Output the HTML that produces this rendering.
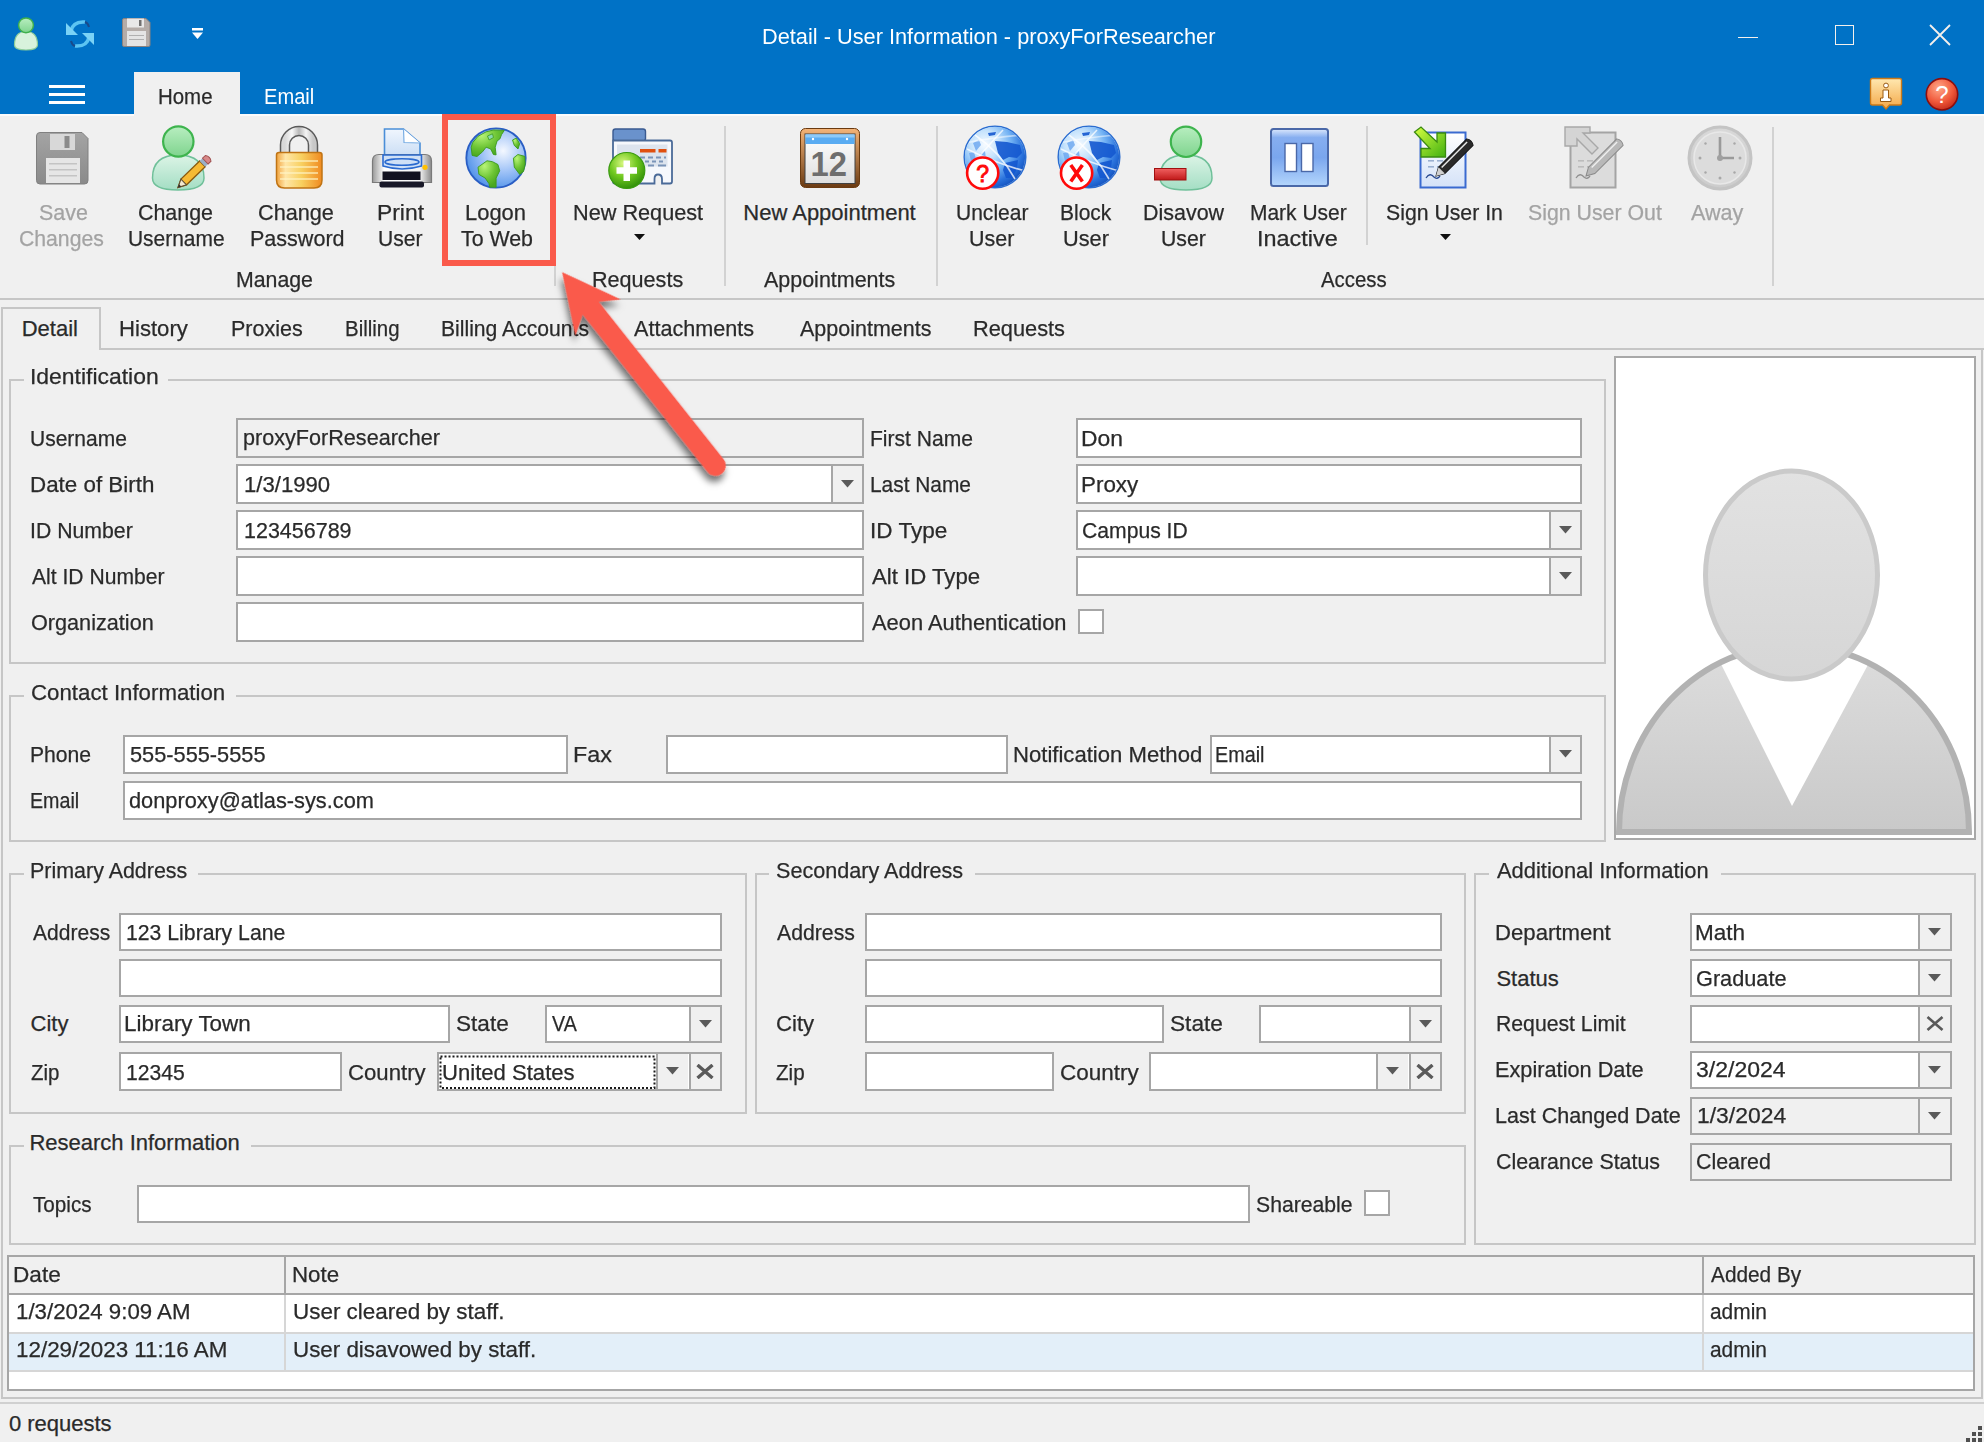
<!DOCTYPE html>
<html><head><meta charset='utf-8'><style>
html,body{margin:0;padding:0;width:1984px;height:1442px;overflow:hidden;background:#f0f0f0}
.a{position:absolute}
.t{position:absolute;font-family:"Liberation Sans",sans-serif;font-size:22px;line-height:22px;white-space:pre;transform-origin:0 0;-webkit-text-stroke:0.25px currentColor}
</style></head><body>
<div class=a style='left:0px;top:0px;width:1984px;height:1442px;background:#f0f0f0;'></div><div class=a style='left:0px;top:0px;width:1984px;height:114px;background:#0072c6;'></div><div class=a style='left:134px;top:72px;width:106px;height:42px;background:#f0f0f0;'></div><div class=a style='left:48.5px;top:85px;width:36px;height:3px;background:#ffffff;'></div><div class=a style='left:48.5px;top:93px;width:36px;height:3px;background:#ffffff;'></div><div class=a style='left:48.5px;top:101px;width:36px;height:3px;background:#ffffff;'></div><div class=a style='left:1738px;top:36.5px;width:20px;height:1.7px;background:#f4f0ec;'></div><div class=a style='left:1834.5px;top:25px;width:19.5px;height:19.5px;border:1.7px solid #f4f0ec;box-sizing:border-box;'></div><svg class=a style='left:1928px;top:23px' width=24 height=24><path d='M2 2L22 22M22 2L2 22' stroke='#f4f0ec' stroke-width='1.8'/></svg><div class=a style='left:0px;top:114px;width:1984px;height:184px;background:#f0f0f0;'></div><div class=a style='left:0px;top:114px;width:134px;height:2px;background:#fbfbfb;'></div><div class=a style='left:240px;top:114px;width:1744px;height:2px;background:#fbfbfb;'></div><div class=a style='left:0px;top:298px;width:1984px;height:2px;background:#c6c6c6;'></div><div class=a style='left:554px;top:126px;width:2px;height:160px;background:#d2d2d2;'></div><div class=a style='left:724px;top:126px;width:2px;height:160px;background:#d2d2d2;'></div><div class=a style='left:936px;top:126px;width:2px;height:160px;background:#d2d2d2;'></div><div class=a style='left:1366px;top:126px;width:2px;height:119px;background:#d2d2d2;'></div><div class=a style='left:1772px;top:127px;width:2px;height:159px;background:#d2d2d2;'></div><div class=a style='left:101px;top:348px;width:1883px;height:2px;background:#c6c6c6;'></div><div class=a style='left:1px;top:307px;width:100px;height:43px;border:2px solid #c6c6c6;border-bottom:none;box-sizing:border-box;background:#f0f0f0'></div><div class=a style='left:1px;top:349px;width:2px;height:1050px;background:#c6c6c6;'></div><div class=a style='left:1981px;top:349px;width:2px;height:1050px;background:#c6c6c6;'></div><div class=a style='left:1px;top:1397px;width:1982px;height:2px;background:#c6c6c6;'></div><div class=a style='left:0px;top:1402px;width:1984px;height:2px;background:#d0d0d0;'></div><div class=a style='left:8.5px;top:378.5px;width:2px;height:285.0px;background:#c6c6c6;'></div><div class=a style='left:1604px;top:378.5px;width:2px;height:285.0px;background:#c6c6c6;'></div><div class=a style='left:8.5px;top:661.5px;width:1597.5px;height:2px;background:#c6c6c6;'></div><div class=a style='left:8.5px;top:378.5px;width:15.5px;height:2px;background:#c6c6c6;'></div><div class=a style='left:168px;top:378.5px;width:1438px;height:2px;background:#c6c6c6;'></div><div class=a style='left:8.5px;top:694.5px;width:2px;height:147.0px;background:#c6c6c6;'></div><div class=a style='left:1604px;top:694.5px;width:2px;height:147.0px;background:#c6c6c6;'></div><div class=a style='left:8.5px;top:839.5px;width:1597.5px;height:2px;background:#c6c6c6;'></div><div class=a style='left:8.5px;top:694.5px;width:15.5px;height:2px;background:#c6c6c6;'></div><div class=a style='left:236px;top:694.5px;width:1370px;height:2px;background:#c6c6c6;'></div><div class=a style='left:8.5px;top:872.5px;width:2px;height:241.0px;background:#c6c6c6;'></div><div class=a style='left:744.5px;top:872.5px;width:2px;height:241.0px;background:#c6c6c6;'></div><div class=a style='left:8.5px;top:1111.5px;width:738.0px;height:2px;background:#c6c6c6;'></div><div class=a style='left:8.5px;top:872.5px;width:15.0px;height:2px;background:#c6c6c6;'></div><div class=a style='left:198px;top:872.5px;width:548.5px;height:2px;background:#c6c6c6;'></div><div class=a style='left:755px;top:872.5px;width:2px;height:241.0px;background:#c6c6c6;'></div><div class=a style='left:1464px;top:872.5px;width:2px;height:241.0px;background:#c6c6c6;'></div><div class=a style='left:755px;top:1111.5px;width:711px;height:2px;background:#c6c6c6;'></div><div class=a style='left:755px;top:872.5px;width:14px;height:2px;background:#c6c6c6;'></div><div class=a style='left:975px;top:872.5px;width:491px;height:2px;background:#c6c6c6;'></div><div class=a style='left:8.5px;top:1144.5px;width:2px;height:100.5px;background:#c6c6c6;'></div><div class=a style='left:1464px;top:1144.5px;width:2px;height:100.5px;background:#c6c6c6;'></div><div class=a style='left:8.5px;top:1243px;width:1457.5px;height:2px;background:#c6c6c6;'></div><div class=a style='left:8.5px;top:1144.5px;width:15.0px;height:2px;background:#c6c6c6;'></div><div class=a style='left:251px;top:1144.5px;width:1215px;height:2px;background:#c6c6c6;'></div><div class=a style='left:1474px;top:872.5px;width:2px;height:372.5px;background:#c6c6c6;'></div><div class=a style='left:1974px;top:872.5px;width:2px;height:372.5px;background:#c6c6c6;'></div><div class=a style='left:1474px;top:1243px;width:502px;height:2px;background:#c6c6c6;'></div><div class=a style='left:1474px;top:872.5px;width:15px;height:2px;background:#c6c6c6;'></div><div class=a style='left:1721px;top:872.5px;width:255px;height:2px;background:#c6c6c6;'></div><div class=a style='left:236px;top:418px;width:628px;height:39.5px;background:#f0f0f0;border:2px solid #a6a6a6;box-sizing:border-box;'></div><div class=a style='left:236px;top:464px;width:628px;height:39.5px;background:#ffffff;border:2px solid #a6a6a6;box-sizing:border-box;'></div><div class=a style='left:831.5px;top:466px;width:30.5px;height:35.5px;background:#f0f0f0;'></div><div class=a style='left:830.5px;top:464px;width:2px;height:39.5px;background:#a6a6a6;'></div><svg class=a style='left:840.8px;top:479.8px' width=13 height=8><path d='M0 0H13L6.5 7.5Z' fill='#5a5a5a'/></svg><div class=a style='left:236px;top:510px;width:628px;height:39.5px;background:#ffffff;border:2px solid #a6a6a6;box-sizing:border-box;'></div><div class=a style='left:236px;top:556px;width:628px;height:39.5px;background:#ffffff;border:2px solid #a6a6a6;box-sizing:border-box;'></div><div class=a style='left:236px;top:602px;width:628px;height:39.5px;background:#ffffff;border:2px solid #a6a6a6;box-sizing:border-box;'></div><div class=a style='left:1076px;top:418px;width:506px;height:39.5px;background:#ffffff;border:2px solid #a6a6a6;box-sizing:border-box;'></div><div class=a style='left:1076px;top:464px;width:506px;height:39.5px;background:#ffffff;border:2px solid #a6a6a6;box-sizing:border-box;'></div><div class=a style='left:1076px;top:510px;width:506px;height:39.5px;background:#ffffff;border:2px solid #a6a6a6;box-sizing:border-box;'></div><div class=a style='left:1549.5px;top:512px;width:30.5px;height:35.5px;background:#f0f0f0;'></div><div class=a style='left:1548.5px;top:510px;width:2px;height:39.5px;background:#a6a6a6;'></div><svg class=a style='left:1558.8px;top:525.8px' width=13 height=8><path d='M0 0H13L6.5 7.5Z' fill='#5a5a5a'/></svg><div class=a style='left:1076px;top:556px;width:506px;height:39.5px;background:#ffffff;border:2px solid #a6a6a6;box-sizing:border-box;'></div><div class=a style='left:1549.5px;top:558px;width:30.5px;height:35.5px;background:#f0f0f0;'></div><div class=a style='left:1548.5px;top:556px;width:2px;height:39.5px;background:#a6a6a6;'></div><svg class=a style='left:1558.8px;top:571.8px' width=13 height=8><path d='M0 0H13L6.5 7.5Z' fill='#5a5a5a'/></svg><div class=a style='left:1078px;top:608.5px;width:25.5px;height:25.5px;background:#ffffff;border:2px solid #a6a6a6;box-sizing:border-box;'></div><div class=a style='left:1614px;top:356px;width:362px;height:484px;box-sizing:border-box;border:2px solid #a8a8a8;background:#fff;overflow:hidden'>
<svg width=358 height=480 style='position:absolute;left:0;top:0'>
<defs><linearGradient id=bodyg x1=0 y1=0 x2=0 y2=1><stop offset=0 stop-color='#dddddd'/><stop offset=1 stop-color='#c9c9c9'/></linearGradient>
<linearGradient id=headg x1=0 y1=0 x2=0 y2=1><stop offset=0 stop-color='#e2e2e2'/><stop offset=1 stop-color='#d6d6d6'/></linearGradient></defs>
<path d='M3 474 A175 187 0 0 1 353 474 Z' fill='url(#bodyg)'/>
<path d='M97 290 L261 290 L176 448 Z' fill='#ffffff'/>
<path d='M3 474 A175 187 0 0 1 353 474 Z' fill='none' stroke='#b2b2b2' stroke-width='6'/>
<ellipse cx='175.5' cy='217' rx='86' ry='104' fill='url(#headg)' stroke='#cacaca' stroke-width='5'/>
</svg></div><div class=a style='left:122.5px;top:734.5px;width:445.5px;height:39.0px;background:#ffffff;border:2px solid #a6a6a6;box-sizing:border-box;'></div><div class=a style='left:666px;top:734.5px;width:342px;height:39.0px;background:#ffffff;border:2px solid #a6a6a6;box-sizing:border-box;'></div><div class=a style='left:1210px;top:734.5px;width:372px;height:39.0px;background:#ffffff;border:2px solid #a6a6a6;box-sizing:border-box;'></div><div class=a style='left:1549.5px;top:736.5px;width:30.5px;height:35.0px;background:#f0f0f0;'></div><div class=a style='left:1548.5px;top:734.5px;width:2px;height:39.0px;background:#a6a6a6;'></div><svg class=a style='left:1558.8px;top:750.0px' width=13 height=8><path d='M0 0H13L6.5 7.5Z' fill='#5a5a5a'/></svg><div class=a style='left:122.5px;top:780.5px;width:1459.5px;height:39.0px;background:#ffffff;border:2px solid #a6a6a6;box-sizing:border-box;'></div><div class=a style='left:119px;top:912.5px;width:603px;height:38.5px;background:#ffffff;border:2px solid #a6a6a6;box-sizing:border-box;'></div><div class=a style='left:119px;top:958.5px;width:603px;height:38.5px;background:#ffffff;border:2px solid #a6a6a6;box-sizing:border-box;'></div><div class=a style='left:119px;top:1004.5px;width:330.5px;height:38.5px;background:#ffffff;border:2px solid #a6a6a6;box-sizing:border-box;'></div><div class=a style='left:545px;top:1004.5px;width:177px;height:38.5px;background:#ffffff;border:2px solid #a6a6a6;box-sizing:border-box;'></div><div class=a style='left:689.5px;top:1006.5px;width:30.5px;height:34.5px;background:#f0f0f0;'></div><div class=a style='left:688.5px;top:1004.5px;width:2px;height:38.5px;background:#a6a6a6;'></div><svg class=a style='left:698.8px;top:1019.8px' width=13 height=8><path d='M0 0H13L6.5 7.5Z' fill='#5a5a5a'/></svg><div class=a style='left:119px;top:1051.5px;width:222.5px;height:39.5px;background:#ffffff;border:2px solid #a6a6a6;box-sizing:border-box;'></div><div class=a style='left:437px;top:1051.5px;width:285px;height:39.5px;background:#ffffff;border:2px solid #a6a6a6;box-sizing:border-box;'></div><div class=a style='left:689.5px;top:1053.5px;width:30.5px;height:35.5px;background:#f0f0f0;'></div><div class=a style='left:688.5px;top:1051.5px;width:2px;height:39.5px;background:#a6a6a6;'></div><svg class=a style='left:696.2px;top:1063.8px' width=18 height=15><path d='M1.5 1L16.5 14M16.5 1L1.5 14' stroke='#5a5a5a' stroke-width='3.4'/></svg><div class=a style='left:657.0px;top:1053.5px;width:30.5px;height:35.5px;background:#f0f0f0;'></div><div class=a style='left:656.0px;top:1051.5px;width:2px;height:39.5px;background:#a6a6a6;'></div><svg class=a style='left:666.2px;top:1067.2px' width=13 height=8><path d='M0 0H13L6.5 7.5Z' fill='#5a5a5a'/></svg><svg class=a style='left:438px;top:1054px' width=220 height=37><rect x='2.5' y='2.5' width='214' height='31.5' fill='none' stroke='#1a1a1a' stroke-width='2' stroke-dasharray='2 2'/></svg><div class=a style='left:865px;top:912.5px;width:577px;height:38.5px;background:#ffffff;border:2px solid #a6a6a6;box-sizing:border-box;'></div><div class=a style='left:865px;top:958.5px;width:577px;height:38.5px;background:#ffffff;border:2px solid #a6a6a6;box-sizing:border-box;'></div><div class=a style='left:865px;top:1004.5px;width:299px;height:38.5px;background:#ffffff;border:2px solid #a6a6a6;box-sizing:border-box;'></div><div class=a style='left:1258.5px;top:1004.5px;width:183.5px;height:38.5px;background:#ffffff;border:2px solid #a6a6a6;box-sizing:border-box;'></div><div class=a style='left:1409.5px;top:1006.5px;width:30.5px;height:34.5px;background:#f0f0f0;'></div><div class=a style='left:1408.5px;top:1004.5px;width:2px;height:38.5px;background:#a6a6a6;'></div><svg class=a style='left:1418.8px;top:1019.8px' width=13 height=8><path d='M0 0H13L6.5 7.5Z' fill='#5a5a5a'/></svg><div class=a style='left:865px;top:1051.5px;width:189px;height:39.5px;background:#ffffff;border:2px solid #a6a6a6;box-sizing:border-box;'></div><div class=a style='left:1148.5px;top:1051.5px;width:293.5px;height:39.5px;background:#ffffff;border:2px solid #a6a6a6;box-sizing:border-box;'></div><div class=a style='left:1409.5px;top:1053.5px;width:30.5px;height:35.5px;background:#f0f0f0;'></div><div class=a style='left:1408.5px;top:1051.5px;width:2px;height:39.5px;background:#a6a6a6;'></div><svg class=a style='left:1416.2px;top:1063.8px' width=18 height=15><path d='M1.5 1L16.5 14M16.5 1L1.5 14' stroke='#5a5a5a' stroke-width='3.4'/></svg><div class=a style='left:1377.0px;top:1053.5px;width:30.5px;height:35.5px;background:#f0f0f0;'></div><div class=a style='left:1376.0px;top:1051.5px;width:2px;height:39.5px;background:#a6a6a6;'></div><svg class=a style='left:1386.2px;top:1067.2px' width=13 height=8><path d='M0 0H13L6.5 7.5Z' fill='#5a5a5a'/></svg><div class=a style='left:136.5px;top:1184.5px;width:1113.5px;height:38.0px;background:#ffffff;border:2px solid #a6a6a6;box-sizing:border-box;'></div><div class=a style='left:1364px;top:1190px;width:25.5px;height:25.5px;background:#ffffff;border:2px solid #a6a6a6;box-sizing:border-box;'></div><div class=a style='left:1690px;top:913px;width:261.5px;height:38px;background:#ffffff;border:2px solid #a6a6a6;box-sizing:border-box;'></div><div class=a style='left:1919.0px;top:915px;width:30.5px;height:34px;background:#f0f0f0;'></div><div class=a style='left:1918.0px;top:913px;width:2px;height:38px;background:#a6a6a6;'></div><svg class=a style='left:1928.2px;top:928.0px' width=13 height=8><path d='M0 0H13L6.5 7.5Z' fill='#5a5a5a'/></svg><div class=a style='left:1690px;top:959px;width:261.5px;height:38px;background:#ffffff;border:2px solid #a6a6a6;box-sizing:border-box;'></div><div class=a style='left:1919.0px;top:961px;width:30.5px;height:34px;background:#f0f0f0;'></div><div class=a style='left:1918.0px;top:959px;width:2px;height:38px;background:#a6a6a6;'></div><svg class=a style='left:1928.2px;top:974.0px' width=13 height=8><path d='M0 0H13L6.5 7.5Z' fill='#5a5a5a'/></svg><div class=a style='left:1690px;top:1004.8px;width:261.5px;height:38.0px;background:#ffffff;border:2px solid #a6a6a6;box-sizing:border-box;'></div><div class=a style='left:1919.0px;top:1006.8px;width:30.5px;height:34.0px;background:#f0f0f0;'></div><div class=a style='left:1918.0px;top:1004.8px;width:2px;height:38.0px;background:#a6a6a6;'></div><svg class=a style='left:1925.8px;top:1016.3px' width=18 height=15><path d='M1.5 1L16.5 14M16.5 1L1.5 14' stroke='#5a5a5a' stroke-width='2.6'/></svg><div class=a style='left:1690px;top:1050.6px;width:261.5px;height:38.0px;background:#ffffff;border:2px solid #a6a6a6;box-sizing:border-box;'></div><div class=a style='left:1919.0px;top:1052.6px;width:30.5px;height:34.0px;background:#f0f0f0;'></div><div class=a style='left:1918.0px;top:1050.6px;width:2px;height:38.0px;background:#a6a6a6;'></div><svg class=a style='left:1928.2px;top:1065.6px' width=13 height=8><path d='M0 0H13L6.5 7.5Z' fill='#5a5a5a'/></svg><div class=a style='left:1690px;top:1096.9px;width:261.5px;height:38.0px;background:#f0f0f0;border:2px solid #a6a6a6;box-sizing:border-box;'></div><div class=a style='left:1919.0px;top:1098.9px;width:30.5px;height:34.0px;background:#f0f0f0;'></div><div class=a style='left:1918.0px;top:1096.9px;width:2px;height:38.0px;background:#a6a6a6;'></div><svg class=a style='left:1928.2px;top:1111.9px' width=13 height=8><path d='M0 0H13L6.5 7.5Z' fill='#5a5a5a'/></svg><div class=a style='left:1690px;top:1142.6px;width:261.5px;height:38.0px;background:#f0f0f0;border:2px solid #a6a6a6;box-sizing:border-box;'></div><div class=a style='left:7px;top:1255px;width:1968px;height:136px;background:#ffffff;border:2px solid #a6a6a6;box-sizing:border-box;'></div><div class=a style='left:9px;top:1257px;width:1964px;height:37px;background:#f0f0f0;'></div><div class=a style='left:9px;top:1293px;width:1964px;height:2px;background:#a6a6a6;'></div><div class=a style='left:9px;top:1332px;width:1964px;height:2px;background:#d6d6d6;'></div><div class=a style='left:9px;top:1334px;width:1964px;height:36px;background:#e3eff9;'></div><div class=a style='left:9px;top:1369.5px;width:1964px;height:2px;background:#d6d6d6;'></div><div class=a style='left:284px;top:1257px;width:2px;height:37px;background:#a6a6a6;'></div><div class=a style='left:1702px;top:1257px;width:2px;height:37px;background:#a6a6a6;'></div><div class=a style='left:284px;top:1295px;width:2px;height:75px;background:#d6d6d6;'></div><div class=a style='left:1702px;top:1295px;width:2px;height:75px;background:#d6d6d6;'></div><div class=a style='left:1978px;top:1426px;width:3.5px;height:3.5px;background:#505050;'></div><div class=a style='left:1972px;top:1432px;width:3.5px;height:3.5px;background:#505050;'></div><div class=a style='left:1978px;top:1432px;width:3.5px;height:3.5px;background:#505050;'></div><div class=a style='left:1966px;top:1438px;width:3.5px;height:3.5px;background:#505050;'></div><div class=a style='left:1972px;top:1438px;width:3.5px;height:3.5px;background:#505050;'></div><div class=a style='left:1978px;top:1438px;width:3.5px;height:3.5px;background:#505050;'></div><div class=a style='left:442px;top:114px;width:114px;height:152px;border:6.5px solid #fa5a4b;box-sizing:border-box'></div>
<svg class=a style='left:0;top:0' width=1984 height=300>
<defs>
<clipPath id=clipG><circle r='30'/></clipPath>
<linearGradient id=gHead x1=0 y1=0 x2=0 y2=1><stop offset=0 stop-color='#b8eec0'/><stop offset=1 stop-color='#7fd48e'/></linearGradient>
<linearGradient id=gBody x1=0 y1=0 x2=0 y2=1><stop offset=0 stop-color='#dcf4e6'/><stop offset=1 stop-color='#a4dec4'/></linearGradient>
<linearGradient id=gLock x1=0 y1=0 x2=1 y2=0><stop offset=0 stop-color='#f2a440'/><stop offset=0.2 stop-color='#ffe6a8'/><stop offset=0.55 stop-color='#f8d060'/><stop offset=1 stop-color='#f08a20'/></linearGradient>
<linearGradient id=gShk x1=0 y1=0 x2=1 y2=0><stop offset=0 stop-color='#d8d8d8'/><stop offset=0.25 stop-color='#f8f8f8'/><stop offset=0.5 stop-color='#b8b8b8'/><stop offset=0.75 stop-color='#f4f4f4'/><stop offset=1 stop-color='#c8c8c8'/></linearGradient>
<linearGradient id=gPrn x1=0 y1=0 x2=1 y2=0><stop offset=0 stop-color='#9a9a9a'/><stop offset=0.2 stop-color='#ffffff'/><stop offset=0.8 stop-color='#f4f4f4'/><stop offset=1 stop-color='#8a8a8a'/></linearGradient>
<linearGradient id=gPaper x1=0 y1=0 x2=0 y2=1><stop offset=0 stop-color='#f0f6fe'/><stop offset=1 stop-color='#c8dcf4'/></linearGradient>
<radialGradient id=gGlobe cx=0.62 cy=0.38 r=0.7><stop offset=0 stop-color='#f4f8ff'/><stop offset=0.45 stop-color='#a8c8f8'/><stop offset=1 stop-color='#4a8ee8'/></radialGradient>
<radialGradient id=gBGlobe cx=0.33 cy=0.3 r=0.8><stop offset=0 stop-color='#f6fbff'/><stop offset=0.3 stop-color='#c4e2fc'/><stop offset=0.55 stop-color='#72b2f4'/><stop offset=0.8 stop-color='#2a72dc'/><stop offset=1 stop-color='#0c4ab8'/></radialGradient>
<radialGradient id=gPlus cx=0.4 cy=0.3 r=0.75><stop offset=0 stop-color='#d8f880'/><stop offset=0.5 stop-color='#70c820'/><stop offset=1 stop-color='#2a8a08'/></radialGradient>
<linearGradient id=gCal x1=0 y1=0 x2=0 y2=1><stop offset=0 stop-color='#f4b478'/><stop offset=1 stop-color='#6a3a12'/></linearGradient>
<linearGradient id=gCalIn x1=0 y1=0 x2=0 y2=1><stop offset=0 stop-color='#ffffff'/><stop offset=1 stop-color='#dedede'/></linearGradient>
<linearGradient id=gPause x1=0 y1=0 x2=0 y2=1><stop offset=0 stop-color='#dce8fc'/><stop offset=0.15 stop-color='#86aef0'/><stop offset=0.5 stop-color='#7aa6ee'/><stop offset=1 stop-color='#b4d6fc'/></linearGradient>
<linearGradient id=gDoc x1=0 y1=0 x2=0 y2=1><stop offset=0 stop-color='#ffffff'/><stop offset=1 stop-color='#d4e2f8'/></linearGradient>
<linearGradient id=gArr x1=0 y1=0 x2=1 y2=1><stop offset=0 stop-color='#d8ff40'/><stop offset=1 stop-color='#40b010'/></linearGradient>
<radialGradient id=gClock cx=0.5 cy=0.4 r=0.6><stop offset=0 stop-color='#ececec'/><stop offset=1 stop-color='#cacaca'/></radialGradient>
<linearGradient id=gInfo x1=0 y1=0 x2=0 y2=1><stop offset=0 stop-color='#ffe8b0'/><stop offset=1 stop-color='#f4a848'/></linearGradient>
<radialGradient id=gHelp cx=0.4 cy=0.3 r=0.75><stop offset=0 stop-color='#ffa888'/><stop offset=0.6 stop-color='#f0583a'/><stop offset=1 stop-color='#c02818'/></radialGradient>
<linearGradient id=gFlop x1=0 y1=0 x2=0 y2=1><stop offset=0 stop-color='#a4a4a4'/><stop offset=1 stop-color='#8a8a8a'/></linearGradient>
<linearGradient id=gRed x1=0 y1=0 x2=0 y2=1><stop offset=0 stop-color='#f06060'/><stop offset=1 stop-color='#c01818'/></linearGradient>
</defs>

<!-- QAT person -->
<path d='M14.5 45 Q14.5 31.5 26 31.5 Q37.5 31.5 37.5 45 Q37.5 50 26 50 Q14.5 50 14.5 45Z' fill='#d8f2dc' stroke='#8ccc98' stroke-width='1.2'/>
<circle cx='26' cy='25.3' r='7.4' fill='url(#gHead)' stroke='#40b04c' stroke-width='1.5'/>
<!-- QAT sync -->
<path d='M71 31 Q73 21 85 22' fill='none' stroke='#5cc4f2' stroke-width='3.5'/>
<path d='M66 23 L66 35 L78 35 Z' fill='#7ad2f6'/>
<path d='M89 37 Q87 47 75 46' fill='none' stroke='#5cc4f2' stroke-width='3.5'/>
<path d='M94 45 L94 33 L82 33 Z' fill='#7ad2f6'/>
<path d='M85 22 Q88 23 89 27' fill='none' stroke='#1a4a8a' stroke-width='2'/>
<path d='M75 46 Q72 45 71 41' fill='none' stroke='#1a4a8a' stroke-width='2'/>
<!-- QAT floppy -->
<path d='M122.5 20 Q122.5 18.5 124 18.5 L146 18.5 L150 22.5 L150 45 Q150 46.5 148.5 46.5 L124 46.5 Q122.5 46.5 122.5 45Z' fill='#b4aca8' stroke='#8a8280' stroke-width='1'/>
<rect x='127' y='18.5' width='17' height='9' fill='#e8e8e8'/>
<rect x='139' y='20' width='2.5' height='6' fill='#707070'/>
<rect x='127' y='31' width='19' height='15' fill='#e4e4e4'/>
<rect x='129' y='35' width='15' height='1' fill='#b0b0b0'/><rect x='129' y='39' width='15' height='1' fill='#b0b0b0'/>
<!-- QAT dropdown -->
<rect x='192' y='28' width='11' height='2.5' fill='#fff'/>
<path d='M192 32.5 H203 L197.5 39 Z' fill='#fff'/>

<!-- Save (disabled floppy) -->
<path d='M36.5 136 Q36.5 132.5 40 132.5 L82 132.5 L88 138.5 L88 180.5 Q88 184 84.5 184 L40 184 Q36.5 184 36.5 180.5Z' fill='url(#gFlop)' stroke='#808080' stroke-width='1'/>
<rect x='50' y='134' width='25' height='16' fill='#d8d8d8'/>
<rect x='64.5' y='136' width='5' height='12' fill='#8a8a8a'/>
<rect x='46' y='158' width='34' height='25' fill='#e6e6e6'/>
<rect x='49' y='163' width='28' height='1.5' fill='#c4c4c4'/><rect x='49' y='169' width='28' height='1.5' fill='#c4c4c4'/><rect x='49' y='175' width='28' height='1.5' fill='#c4c4c4'/>

<!-- Change Username -->
<path d='M152.5 178 Q152.5 155 178 155 Q204 155 204 178 Q204 190 178 190 Q152.5 190 152.5 178Z' fill='url(#gBody)' stroke='#70c09a' stroke-width='1.5'/>
<circle cx='178.3' cy='141.5' r='15.2' fill='url(#gHead)' stroke='#3eb44e' stroke-width='2.2'/>
<g transform='translate(178 187.5) rotate(-44)'>
<path d='M0 0 L8 -4 L34 -4 L34 4 L8 4 Z' fill='#f6ba34' stroke='#8a5a10' stroke-width='1.3'/>
<path d='M0 0 L8 -4 L8 4 Z' fill='#f4e8d0' stroke='#5a4a30' stroke-width='1'/>
<path d='M0 0 L3 -1.5 L3 1.5Z' fill='#303030'/>
<rect x='34' y='-4' width='4' height='8' fill='#9ab0c8'/>
<path d='M38 -4 L42 -4 Q45 0 42 4 L38 4 Z' fill='#d88888' stroke='#a05050' stroke-width='1'/>
</g>

<!-- Change Password (lock) -->
<path d='M285 153 V145 A14 14 0 0 1 313 145 V153' fill='none' stroke='#5a5a5a' stroke-width='10.5'/>
<path d='M285 153 V145 A14 14 0 0 1 313 145 V153' fill='none' stroke='url(#gShk)' stroke-width='7.5'/>
<path d='M276.5 155 Q276.5 152.5 279 152.5 L319.5 152.5 Q322 152.5 322 155 L322 180 Q322 188 314 188 L284.5 188 Q276.5 188 276.5 180Z' fill='url(#gLock)' stroke='#c07414' stroke-width='1.5'/>
<g fill='#fff6c8' opacity='0.6'><rect x='280' y='160' width='38' height='2'/><rect x='280' y='166' width='38' height='2'/><rect x='280' y='172' width='38' height='2'/><rect x='280' y='178' width='38' height='2'/></g>

<!-- Print User -->
<path d='M384.5 129 L403.5 129 L420 143 L420 158 L384.5 158 Z' fill='url(#gPaper)' stroke='#4a8ed8' stroke-width='1.6'/>
<path d='M403.5 129 L404 142.5 L420 143' fill='#fff' stroke='#7aaee4' stroke-width='1.2'/>
<path d='M372.5 161 Q372.5 154.5 379 154.5 L425 154.5 Q431.5 154.5 431.5 161 L431.5 182.5 L372.5 182.5 Z' fill='url(#gPrn)' stroke='#7a7a7a' stroke-width='1.2'/>
<path d='M383 155 L421.5 155 L421.5 166 Q402 172 383 166 Z' fill='#cfe0f6' stroke='#2a6ad0' stroke-width='1.6'/>
<ellipse cx='402' cy='162' rx='17' ry='3.2' fill='none' stroke='#2a6ad0' stroke-width='1.5'/>
<rect x='382.5' y='171.5' width='38' height='8.5' fill='#121220'/>
<rect x='379.5' y='181.5' width='44.5' height='6' rx='2' fill='#181828'/>
<circle cx='425' cy='167.3' r='2.6' fill='#ffc000'/>

<!-- Logon to web globe -->
<radialGradient id=gCont cx=0.3 cy=0.2 r=0.8><stop offset=0 stop-color='#b8f478'/><stop offset=0.6 stop-color='#6cc434'/><stop offset=1 stop-color='#4aa820'/></radialGradient>
<circle cx='496' cy='158' r='29.7' fill='url(#gGlobe)' stroke='#2a5ec4' stroke-width='1.8'/>
<g fill='url(#gCont)' stroke='#3c9a1c' stroke-width='0.9'>
<path d='M472.1 155.4 L471.2 147.2 L472.6 142.7 L478 136.3 L486.1 131.8 L493.4 130 L504.3 130.4 L501.6 134.5 L499.8 139 L497.1 140.9 L495.2 147.2 L496.1 154.9 L493.4 154.5 L490.7 149 L486.1 147.2 L482.5 151.8 L477 156.5 Z'/>
<path d='M487 160.8 L492.5 161.7 L497.9 164.5 L499.7 170.8 L496.1 178.1 L496.1 187.2 L489.8 187.2 L488.9 183.5 L485.2 178.1 L478.9 174.4 L478 167.2 Z'/>
<path d='M513.4 158.1 L517.9 154.5 L524.7 156.3 L525.2 164 L523.5 171.5 L519.7 174.4 L514.3 167.2 Z'/>
<path d='M512.5 140 L516.2 138.1 L519.7 143.6 L518 149 L514.3 145.4 Z'/>
</g>
<path d='M487.5 136 L492.5 133.8 L493.5 137.5 L489 140 Z' fill='#8ad8b0' stroke='#3c9a1c' stroke-width='0.8'/>

<!-- New Request -->
<rect x='613' y='129' width='32.5' height='12' rx='2.5' fill='#6a92cc' stroke='#3a5a90' stroke-width='1.4'/>
<path d='M613 140.5 L670 140.5 Q672 140.5 672 142.5 L672 181.5 Q672 183.5 670 183.5 L662 183.5 L662 179 Q662 174.5 658 174.5 Q654.5 174.5 654.5 179 L654.5 183.5 L615 183.5 Q613 183.5 613 181.5 Z' fill='#f6f8fc' stroke='#4a6a98' stroke-width='1.8'/>
<rect x='617' y='144.5' width='50.5' height='22' fill='#dde4ee'/>
<rect x='640' y='149' width='15.5' height='3.5' fill='#e05010'/><rect x='658.5' y='149' width='8' height='3.5' fill='#e05010'/>
<g fill='#7a94b8'><rect x='640' y='156.5' width='5' height='2'/><rect x='648' y='156.5' width='5' height='2'/><rect x='656' y='156.5' width='5' height='2'/><rect x='664' y='156.5' width='2' height='2'/>
<rect x='645' y='160.5' width='4' height='2'/><rect x='652' y='160.5' width='4' height='2'/><rect x='659' y='160.5' width='4' height='2'/>
<rect x='648' y='164.5' width='6' height='2'/><rect x='658' y='164.5' width='8' height='2'/></g>
<circle cx='626.8' cy='170.5' r='18' fill='url(#gPlus)' stroke='#3a9a10' stroke-width='1.2'/>
<path d='M623.5 160.5 H630 V167.2 H637 V173.7 H630 V181 H623.5 V173.7 H616.5 V167.2 H623.5 Z' fill='#ffffff'/>
<!-- dropdown arrows -->
<path d='M634 234 H645 L639.5 240 Z' fill='#101010'/>
<path d='M1440 234 H1451 L1445.5 240 Z' fill='#101010'/>

<!-- Calendar -->
<rect x='800.5' y='128.5' width='59' height='59' rx='5' fill='url(#gCal)' stroke='#6a3a10' stroke-width='1'/>
<rect x='805' y='134' width='50' height='49.5' fill='url(#gCalIn)' stroke='#404040' stroke-width='1'/>
<rect x='805.5' y='134.5' width='49' height='9.5' fill='#5aacf2'/>
<rect x='805.5' y='134.5' width='49' height='3' fill='#8ecaf8'/>
<circle cx='813' cy='139' r='1.2' fill='#fff'/><circle cx='847' cy='139' r='1.2' fill='#fff'/>
<text x='810.5' y='176.5' font-family='Liberation Sans' font-weight='bold' font-size='36' fill='#6e6e6e' transform='translate(810.5 0) scale(0.91 1) translate(-810.5 0)'>12</text>

<!-- Unclear User globe -->
<g transform='translate(995 157)'><g fill='none' stroke='#2a6cd0' stroke-width='1.5'><circle r='30.8'/></g>
<circle r='30.2' fill='url(#gBGlobe)'/>
<g fill='#6aa6f0' opacity='0.8'><path d='M-22 -14 L-16 -17 L-14 -12 L-19 -6 Z'/><path d='M-26 -4 L-21 -5 L-19 2 L-24 4 Z'/><path d='M-15 -3 L-10 -6 L-9 2 L-13 6 Z'/></g>
<g fill='#1458d0' opacity='0.9'><path d='M0 -16 L12 -15 L25 -12 L27 -4 L22 1 L14 0 L8 3 L3 -4 Z'/><path d='M10 6 L23 3 L22 12 L17 21 L11 21 L8 13 Z'/><path d='M-7 -24 L1 -25 L0 -22 L-6 -21 Z'/></g>
<g fill='none' stroke='#ffffff' stroke-opacity='0.75' stroke-width='1.6' clip-path='url(#clipG)'>
<path d='M-26 12 Q-12 -6 8 -27'/><path d='M-28 -8 Q0 6 30 14'/><path d='M-20 -22 Q5 -5 20 22'/><path d='M-30 -14 Q0 -20 28 -22' stroke-opacity='0.5'/>
</g></g>
<circle cx='982.7' cy='173.1' r='15.6' fill='#ffffff' stroke='#ff0a0a' stroke-width='2.6'/>
<text x='982.7' y='181.8' font-family='Liberation Sans' font-size='23' fill='#ff0a0a' text-anchor='middle' stroke='#ff0a0a' stroke-width='0.9'>?</text>

<!-- Block User globe -->
<g transform='translate(1089 157)'><g fill='none' stroke='#2a6cd0' stroke-width='1.5'><circle r='30.8'/></g>
<circle r='30.2' fill='url(#gBGlobe)'/>
<g fill='#6aa6f0' opacity='0.8'><path d='M-22 -14 L-16 -17 L-14 -12 L-19 -6 Z'/><path d='M-26 -4 L-21 -5 L-19 2 L-24 4 Z'/><path d='M-15 -3 L-10 -6 L-9 2 L-13 6 Z'/></g>
<g fill='#1458d0' opacity='0.9'><path d='M0 -16 L12 -15 L25 -12 L27 -4 L22 1 L14 0 L8 3 L3 -4 Z'/><path d='M10 6 L23 3 L22 12 L17 21 L11 21 L8 13 Z'/><path d='M-7 -24 L1 -25 L0 -22 L-6 -21 Z'/></g>
<g fill='none' stroke='#ffffff' stroke-opacity='0.75' stroke-width='1.6' clip-path='url(#clipG)'>
<path d='M-26 12 Q-12 -6 8 -27'/><path d='M-28 -8 Q0 6 30 14'/><path d='M-20 -22 Q5 -5 20 22'/><path d='M-30 -14 Q0 -20 28 -22' stroke-opacity='0.5'/>
</g></g>
<circle cx='1076.6' cy='173.1' r='15.6' fill='#ffffff' stroke='#ff0a0a' stroke-width='2.6'/>
<path d='M1070.8 165 L1082.4 181.5 M1082.4 165 L1070.8 181.5' stroke='#ff0a0a' stroke-width='3.6'/>

<!-- Disavow User -->
<path d='M1160 178 Q1160 155 1186 155 Q1212 155 1212 178 Q1212 190 1186 190 Q1160 190 1160 178Z' fill='url(#gBody)' stroke='#70c09a' stroke-width='1.5'/>
<circle cx='1186' cy='141.8' r='15.2' fill='url(#gHead)' stroke='#3eb44e' stroke-width='2.2'/>
<rect x='1154.5' y='168.5' width='31.5' height='11.5' fill='url(#gRed)' stroke='#a01010' stroke-width='1'/>

<!-- Mark User Inactive (pause) -->
<rect x='1271' y='129' width='57' height='57' rx='2.5' fill='url(#gPause)' stroke='#4a68a8' stroke-width='2'/>
<rect x='1285' y='143.5' width='11.5' height='28' fill='#fff' stroke='#4a68a8' stroke-width='1.4'/>
<rect x='1301.5' y='143.5' width='11.5' height='28' fill='#fff' stroke='#4a68a8' stroke-width='1.4'/>

<!-- Sign User In -->
<rect x='1420.5' y='132.5' width='45' height='55' fill='url(#gDoc)' stroke='#3a6ad0' stroke-width='2'/>
<g fill='#9ab0d0'><rect x='1428' y='160' width='6' height='1.6'/><rect x='1437' y='160' width='6' height='1.6'/><rect x='1428' y='166' width='6' height='1.6'/><rect x='1437' y='166' width='6' height='1.6'/></g>
<path d='M1426 178 Q1430 172 1434 177 Q1437 180 1440 176' fill='none' stroke='#2a4a90' stroke-width='1.3'/>
<path d='M1414.5 132 L1421 127 L1437 142 L1437 133 L1445.5 133 L1445.5 157 L1421 157 L1421 148.5 L1430 148.5 Z' fill='url(#gArr)' stroke='#3a8a10' stroke-width='1.3'/>
<g transform='translate(1436 176) rotate(-45)'>
<path d='M0 0 L8 -4.5 L48 -4.5 Q51 0 48 4.5 L8 4.5 Z' fill='#2a2a2a' stroke='#101010' stroke-width='1'/>
<path d='M10 -2 L46 -2' stroke='#e8e8e8' stroke-width='1.5'/>
<path d='M0 0 L8 -4.5 L8 4.5Z' fill='#d0d0d0'/>
</g>

<!-- Sign User Out (disabled) -->
<rect x='1570.5' y='132.5' width='45' height='55' fill='#dcdcdc' stroke='#a4a4a4' stroke-width='2'/>
<g fill='#bcbcbc'><rect x='1578' y='160' width='6' height='1.6'/><rect x='1587' y='160' width='6' height='1.6'/><rect x='1578' y='166' width='6' height='1.6'/><rect x='1587' y='166' width='6' height='1.6'/></g>
<path d='M1576 178 Q1580 172 1584 177 Q1587 180 1590 176' fill='none' stroke='#909090' stroke-width='1.3'/>
<path d='M1565 127 L1590 127 L1590 133 L1583 133 L1598 148 L1592 154 L1577 139 L1577 146 L1565 146 Z' fill='#d4d4d4' stroke='#a8a8a8' stroke-width='1.4'/>
<g transform='translate(1586 176) rotate(-45)'>
<path d='M0 0 L8 -4.5 L48 -4.5 Q51 0 48 4.5 L8 4.5 Z' fill='#b8b8b8' stroke='#8a8a8a' stroke-width='1'/>
<path d='M10 -2 L46 -2' stroke='#eeeeee' stroke-width='1.5'/>
</g>

<!-- Away (clock) -->
<circle cx='1720' cy='158' r='31' fill='url(#gClock)' stroke='#c4c4c4' stroke-width='3'/>
<circle cx='1720' cy='158' r='26' fill='#dcdcdc' stroke='#e8e8e8' stroke-width='1.5'/>
<path d='M1720 137 V158 H1734' fill='none' stroke='#9a9a9a' stroke-width='2.6'/>
<circle cx='1720' cy='158' r='3' fill='#a0a0a0'/>
<g fill='#a8a8a8'><circle cx='1720' cy='178' r='1.5'/><circle cx='1700' cy='158' r='1.5'/><circle cx='1740' cy='158' r='1.5'/><circle cx='1705.5' cy='143.5' r='1.2'/><circle cx='1734.5' cy='143.5' r='1.2'/><circle cx='1705.5' cy='172.5' r='1.2'/><circle cx='1734.5' cy='172.5' r='1.2'/></g>

<!-- Info -->
<path d='M1870.5 80.5 Q1870.5 78.5 1872.5 78.5 L1899.5 78.5 Q1901.5 78.5 1901.5 80.5 L1901.5 103 Q1901.5 105 1899.5 105 L1889.5 105 L1886 109 L1882.5 105 L1872.5 105 Q1870.5 105 1870.5 103 Z' fill='url(#gInfo)' stroke='#cc7a18' stroke-width='1.4'/>
<circle cx='1886' cy='85.5' r='2.4' fill='#fff' stroke='#9a5a10' stroke-width='1'/>
<path d='M1883 90 H1888.5 V98 L1891 98 V101.5 H1880.5 V98 L1883 98 Z' fill='#fff' stroke='#9a5a10' stroke-width='1'/>
<!-- Help -->
<circle cx='1942' cy='94.3' r='15.7' fill='url(#gHelp)' stroke='#8a0e0e' stroke-width='1.6'/>
<text x='1942' y='103' font-family='Liberation Sans' font-size='24' fill='#ffffff' text-anchor='middle'>?</text>
</svg>

<div class=t style='left:762.0px;top:26.2px;color:#ffffff;transform:scaleX(0.9890);-webkit-text-stroke:0;'>Detail - User Information - proxyForResearcher</div>
<div class=t style='left:158.1px;top:86.0px;color:#2a2a2a;transform:scaleX(0.9286);'>Home</div>
<div class=t style='left:263.7px;top:86.0px;color:#ffffff;transform:scaleX(0.9135);-webkit-text-stroke:0;'>Email</div>
<div class=t style='left:38.5px;top:202.0px;color:#a3a3a3;transform:scaleX(0.9750);'>Save</div>
<div class=t style='left:19.0px;top:228.0px;color:#a3a3a3;transform:scaleX(0.9628);'>Changes</div>
<div class=t style='left:138.4px;top:202.0px;color:#2a2a2a;transform:scaleX(0.9733);'>Change</div>
<div class=t style='left:127.9px;top:228.0px;color:#2a2a2a;transform:scaleX(0.9515);'>Username</div>
<div class=t style='left:258.0px;top:202.0px;color:#2a2a2a;transform:scaleX(0.9840);'>Change</div>
<div class=t style='left:249.7px;top:228.0px;color:#2a2a2a;transform:scaleX(0.9785);'>Password</div>
<div class=t style='left:376.9px;top:202.0px;color:#2a2a2a;transform:scaleX(1.0395);'>Print</div>
<div class=t style='left:377.7px;top:228.0px;color:#2a2a2a;transform:scaleX(0.9568);'>User</div>
<div class=t style='left:464.7px;top:202.0px;color:#2a2a2a;transform:scaleX(0.9966);'>Logon</div>
<div class=t style='left:460.5px;top:228.0px;color:#2a2a2a;transform:scaleX(0.9703);'>To Web</div>
<div class=t style='left:573.3px;top:202.0px;color:#2a2a2a;transform:scaleX(0.9854);'>New Request</div>
<div class=t style='left:743.3px;top:202.0px;color:#2a2a2a;'>New Appointment</div>
<div class=t style='left:955.5px;top:202.0px;color:#2a2a2a;transform:scaleX(0.9554);'>Unclear</div>
<div class=t style='left:968.8px;top:228.0px;color:#2a2a2a;transform:scaleX(0.9750);'>User</div>
<div class=t style='left:1060.1px;top:202.0px;color:#2a2a2a;transform:scaleX(0.9538);'>Block</div>
<div class=t style='left:1062.5px;top:228.0px;color:#2a2a2a;transform:scaleX(0.9886);'>User</div>
<div class=t style='left:1143.0px;top:202.0px;color:#2a2a2a;transform:scaleX(0.9753);'>Disavow</div>
<div class=t style='left:1161.1px;top:228.0px;color:#2a2a2a;transform:scaleX(0.9659);'>User</div>
<div class=t style='left:1249.5px;top:202.0px;color:#2a2a2a;transform:scaleX(0.9525);'>Mark User</div>
<div class=t style='left:1256.9px;top:228.0px;color:#2a2a2a;transform:scaleX(1.0644);'>Inactive</div>
<div class=t style='left:1386.4px;top:202.0px;color:#2a2a2a;transform:scaleX(0.9655);'>Sign User In</div>
<div class=t style='left:1528.0px;top:202.0px;color:#a3a3a3;transform:scaleX(0.9686);'>Sign User Out</div>
<div class=t style='left:1691.3px;top:202.0px;color:#a3a3a3;transform:scaleX(0.9815);'>Away</div>
<div class=t style='left:236.0px;top:269.3px;color:#2a2a2a;transform:scaleX(0.9675);'>Manage</div>
<div class=t style='left:592.0px;top:269.3px;color:#2a2a2a;transform:scaleX(0.9811);'>Requests</div>
<div class=t style='left:764.0px;top:269.3px;color:#2a2a2a;transform:scaleX(0.9754);'>Appointments</div>
<div class=t style='left:1321.4px;top:269.3px;color:#2a2a2a;transform:scaleX(0.9271);'>Access</div>
<div class=t style='left:21.7px;top:317.5px;color:#2a2a2a;'>Detail</div>
<div class=t style='left:119.0px;top:317.5px;color:#2a2a2a;transform:scaleX(1.0060);'>History</div>
<div class=t style='left:231.3px;top:317.5px;color:#2a2a2a;transform:scaleX(0.9775);'>Proxies</div>
<div class=t style='left:345.1px;top:317.5px;color:#2a2a2a;transform:scaleX(0.9286);'>Billing</div>
<div class=t style='left:441.4px;top:317.5px;color:#2a2a2a;transform:scaleX(0.9603);'>Billing Accounts</div>
<div class=t style='left:634.2px;top:317.5px;color:#2a2a2a;transform:scaleX(0.9820);'>Attachments</div>
<div class=t style='left:799.7px;top:317.5px;color:#2a2a2a;transform:scaleX(0.9769);'>Appointments</div>
<div class=t style='left:973.2px;top:317.5px;color:#2a2a2a;transform:scaleX(0.9900);'>Requests</div>
<div class=t style='left:29.8px;top:366.0px;color:#2a2a2a;transform:scaleX(1.0417);'>Identification</div>
<div class=t style='left:29.9px;top:427.5px;color:#2a2a2a;transform:scaleX(0.9545);'>Username</div>
<div class=t style='left:29.8px;top:473.5px;color:#2a2a2a;transform:scaleX(1.0168);'>Date of Birth</div>
<div class=t style='left:29.9px;top:519.5px;color:#2a2a2a;transform:scaleX(0.9663);'>ID Number</div>
<div class=t style='left:31.8px;top:565.5px;color:#2a2a2a;transform:scaleX(0.9587);'>Alt ID Number</div>
<div class=t style='left:30.8px;top:611.5px;color:#2a2a2a;transform:scaleX(0.9837);'>Organization</div>
<div class=t style='left:242.9px;top:427.4px;color:#2a2a2a;transform:scaleX(0.9819);'>proxyForResearcher</div>
<div class=t style='left:244.0px;top:473.5px;color:#2a2a2a;transform:scaleX(1.0060);'>1/3/1990</div>
<div class=t style='left:244.0px;top:519.6px;color:#2a2a2a;transform:scaleX(0.9766);'>123456789</div>
<div class=t style='left:869.8px;top:428.0px;color:#2a2a2a;transform:scaleX(0.9571);'>First Name</div>
<div class=t style='left:869.8px;top:474.0px;color:#2a2a2a;transform:scaleX(0.9490);'>Last Name</div>
<div class=t style='left:869.7px;top:520.0px;color:#2a2a2a;transform:scaleX(1.0247);'>ID Type</div>
<div class=t style='left:871.7px;top:566.0px;color:#2a2a2a;transform:scaleX(1.0085);'>Alt ID Type</div>
<div class=t style='left:871.7px;top:612.0px;color:#2a2a2a;transform:scaleX(0.9938);'>Aeon Authentication</div>
<div class=t style='left:1080.7px;top:427.5px;color:#2a2a2a;transform:scaleX(1.0405);'>Don</div>
<div class=t style='left:1080.8px;top:473.5px;color:#2a2a2a;transform:scaleX(1.0185);'>Proxy</div>
<div class=t style='left:1082.0px;top:519.5px;color:#2a2a2a;transform:scaleX(0.9611);'>Campus ID</div>
<div class=t style='left:31.0px;top:681.5px;color:#2a2a2a;transform:scaleX(1.0116);'>Contact Information</div>
<div class=t style='left:30.1px;top:743.5px;color:#2a2a2a;transform:scaleX(0.9607);'>Phone</div>
<div class=t style='left:130.0px;top:743.5px;color:#2a2a2a;transform:scaleX(0.9889);'>555-555-5555</div>
<div class=t style='left:572.5px;top:743.5px;color:#2a2a2a;transform:scaleX(1.0588);'>Fax</div>
<div class=t style='left:1012.6px;top:743.5px;color:#2a2a2a;transform:scaleX(1.0049);'>Notification Method</div>
<div class=t style='left:1215.2px;top:744.0px;color:#2a2a2a;transform:scaleX(0.8981);'>Email</div>
<div class=t style='left:30.2px;top:789.5px;color:#2a2a2a;transform:scaleX(0.8942);'>Email</div>
<div class=t style='left:129.3px;top:790.0px;color:#2a2a2a;transform:scaleX(0.9906);'>donproxy@atlas-sys.com</div>
<div class=t style='left:29.6px;top:860.0px;color:#2a2a2a;transform:scaleX(0.9748);'>Primary Address</div>
<div class=t style='left:32.6px;top:921.5px;color:#2a2a2a;transform:scaleX(0.9563);'>Address</div>
<div class=t style='left:126.1px;top:921.5px;color:#2a2a2a;transform:scaleX(0.9648);'>123 Library Lane</div>
<div class=t style='left:30.5px;top:1013.0px;color:#2a2a2a;'>City</div>
<div class=t style='left:123.6px;top:1013.0px;color:#2a2a2a;transform:scaleX(1.0198);'>Library Town</div>
<div class=t style='left:456.1px;top:1013.0px;color:#2a2a2a;transform:scaleX(1.0260);'>State</div>
<div class=t style='left:551.7px;top:1013.0px;color:#2a2a2a;transform:scaleX(0.8929);'>VA</div>
<div class=t style='left:30.6px;top:1062.0px;color:#2a2a2a;transform:scaleX(0.9310);'>Zip</div>
<div class=t style='left:126.1px;top:1062.0px;color:#2a2a2a;transform:scaleX(0.9610);'>12345</div>
<div class=t style='left:348.4px;top:1062.0px;color:#2a2a2a;transform:scaleX(1.0079);'>Country</div>
<div class=t style='left:441.5px;top:1062.0px;color:#2a2a2a;transform:scaleX(1.0039);'>United States</div>
<div class=t style='left:776.3px;top:860.0px;color:#2a2a2a;transform:scaleX(0.9810);'>Secondary Address</div>
<div class=t style='left:777.3px;top:922.0px;color:#2a2a2a;transform:scaleX(0.9650);'>Address</div>
<div class=t style='left:776.3px;top:1013.0px;color:#2a2a2a;transform:scaleX(1.0081);'>City</div>
<div class=t style='left:1169.8px;top:1013.0px;color:#2a2a2a;transform:scaleX(1.0300);'>State</div>
<div class=t style='left:776.4px;top:1062.0px;color:#2a2a2a;transform:scaleX(0.9379);'>Zip</div>
<div class=t style='left:1059.8px;top:1062.0px;color:#2a2a2a;transform:scaleX(1.0211);'>Country</div>
<div class=t style='left:29.4px;top:1132.0px;color:#2a2a2a;'>Research Information</div>
<div class=t style='left:32.5px;top:1194.0px;color:#2a2a2a;transform:scaleX(0.9403);'>Topics</div>
<div class=t style='left:1256.3px;top:1194.0px;color:#2a2a2a;transform:scaleX(0.9633);'>Shareable</div>
<div class=t style='left:1497.4px;top:860.0px;color:#2a2a2a;transform:scaleX(0.9948);'>Additional Information</div>
<div class=t style='left:1495.4px;top:921.5px;color:#2a2a2a;transform:scaleX(1.0071);'>Department</div>
<div class=t style='left:1496.4px;top:967.5px;color:#2a2a2a;'>Status</div>
<div class=t style='left:1495.5px;top:1013.0px;color:#2a2a2a;transform:scaleX(0.9639);'>Request Limit</div>
<div class=t style='left:1495.4px;top:1059.0px;color:#2a2a2a;transform:scaleX(0.9878);'>Expiration Date</div>
<div class=t style='left:1495.4px;top:1105.0px;color:#2a2a2a;transform:scaleX(0.9791);'>Last Changed Date</div>
<div class=t style='left:1496.4px;top:1151.0px;color:#2a2a2a;transform:scaleX(0.9719);'>Clearance Status</div>
<div class=t style='left:1695.2px;top:921.5px;color:#2a2a2a;transform:scaleX(1.0239);'>Math</div>
<div class=t style='left:1696.2px;top:967.5px;color:#2a2a2a;transform:scaleX(0.9867);'>Graduate</div>
<div class=t style='left:1696.2px;top:1059.0px;color:#2a2a2a;transform:scaleX(1.0464);'>3/2/2024</div>
<div class=t style='left:1696.5px;top:1105.0px;color:#2a2a2a;transform:scaleX(1.0410);'>1/3/2024</div>
<div class=t style='left:1696.2px;top:1151.0px;color:#2a2a2a;transform:scaleX(0.9720);'>Cleared</div>
<div class=t style='left:13.4px;top:1263.5px;color:#2a2a2a;transform:scaleX(1.0273);'>Date</div>
<div class=t style='left:291.5px;top:1263.5px;color:#2a2a2a;transform:scaleX(1.0136);'>Note</div>
<div class=t style='left:1711.3px;top:1263.5px;color:#2a2a2a;transform:scaleX(0.9458);'>Added By</div>
<div class=t style='left:15.5px;top:1301.3px;color:#2a2a2a;transform:scaleX(1.0118);'>1/3/2024 9:09 AM</div>
<div class=t style='left:293.0px;top:1301.3px;color:#2a2a2a;transform:scaleX(1.0196);'>User cleared by staff.</div>
<div class=t style='left:1710.3px;top:1301.3px;color:#2a2a2a;transform:scaleX(0.9500);'>admin</div>
<div class=t style='left:15.5px;top:1339.3px;color:#2a2a2a;transform:scaleX(1.0181);'>12/29/2023 11:16 AM</div>
<div class=t style='left:293.0px;top:1339.3px;color:#2a2a2a;transform:scaleX(1.0165);'>User disavowed by staff.</div>
<div class=t style='left:1710.3px;top:1339.3px;color:#2a2a2a;transform:scaleX(0.9500);'>admin</div>
<div class=t style='left:8.9px;top:1412.6px;color:#2a2a2a;'>0 requests</div>
<svg class=a style='left:0;top:0' width=1984 height=1442>
<defs><filter id=sh x='-20%' y='-20%' width='140%' height='140%'><feDropShadow dx='4' dy='5' stdDeviation='3.5' flood-color='#000' flood-opacity='0.55'/></filter></defs>
<g transform='translate(562.1 272.1) rotate(51.57)' filter='url(#sh)'>
<path d='M0 0 L58 29 L46 10.25 L247 10.25 A10.25 10.25 0 0 0 247 -10.25 L46 -10.25 L58 -29 Z' fill='#fa5a4b'/>
</g></svg>
</body></html>
